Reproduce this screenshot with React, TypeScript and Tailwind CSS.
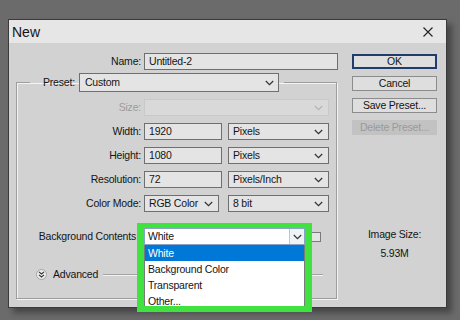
import React from "react";

function Chevron({ color = "#333" }: { color?: string }) {
	return (
		<svg width="9" height="6" viewBox="0 0 9 6" className="shrink-0">
			<path d="M0.8 1 L4.5 4.7 L8.2 1" fill="none" stroke={color} strokeWidth="1.2" />
		</svg>
	);
}

function Field({ value, w }: { value: string; w: string }) {
	return (
		<div className={`${w} h-[17px] border border-[#6f6f6f] bg-[#e4e4e4] pl-[4px] flex items-center text-[10.5px] leading-none`}>
			{value}
		</div>
	);
}

function Select({ value, w }: { value: string; w: string }) {
	return (
		<div className={`${w} h-[17px] border border-[#6f6f6f] bg-[#e4e4e4] pl-[4px] pr-[5px] flex items-center justify-between text-[10.5px] leading-none`}>
			<span>{value}</span>
			<Chevron />
		</div>
	);
}

function Label({ text, dim }: { text: string; dim?: boolean }) {
	return (
		<div className={`w-[124px] text-right text-[10.5px] leading-none ${dim ? "text-[#9c9c9c]" : ""}`}>
			{text}
		</div>
	);
}

function Button({ text, primary, disabled }: { text: string; primary?: boolean; disabled?: boolean }) {
	let cls = "border border-[#8c8c8c] bg-[#dedede]";
	if (primary) cls = "border-2 border-[#1f3c6c] bg-[#dedede]";
	if (disabled) cls = "border border-[#c2c2c2] bg-[#c2c2c2] text-[#9a9a9a]";
	return (
		<div className={`w-[85px] h-[15px] flex items-center justify-center text-[10.5px] leading-none ${cls}`}>
			{text}
		</div>
	);
}

export default function App() {
	return (
		<div className="w-[460px] h-[320px] overflow-hidden bg-[#6b6b6b] pt-[19px] pl-[8px] font-['Liberation_Sans',Arial,sans-serif] tracking-[-0.2px] text-[#141414]">
			<div className="w-[439px] h-[289px] bg-[#d2d2d2] border border-[#3a3a3a] shadow-[5px_5px_6px_rgba(0,0,0,0.35)] flex flex-col">
				{/* title bar */}
				<div className="h-[23px] shrink-0 bg-[#e6e6e6] flex items-center justify-between pl-[3px] pr-[13px]">
					<span className="text-[14px] leading-none tracking-normal">New</span>
					<svg width="10" height="10" viewBox="0 0 10 10">
						<path d="M0.5 0.5 L9.5 9.5 M9.5 0.5 L0.5 9.5" stroke="#222" strokeWidth="1.1" />
					</svg>
				</div>

				<div className="flex flex-1">
					{/* left side */}
					<div className="w-[331px] pt-[10px]">
						<div className="flex items-center">
							<div className="w-[132px] text-right text-[10.5px] leading-none">Name:</div>
							<div className="ml-[3px]">
								<Field value="Untitled-2" w="w-[194px]" />
							</div>
						</div>

						<fieldset className="ml-[7px] mt-[3px] w-[321px] border border-[#9d9d9d] shadow-[inset_1px_1px_0_#f4f4f4,1px_1px_0_#f4f4f4] pb-[18px]">
							<legend className="ml-[13px] pl-[13px] pr-[5px] flex items-center gap-[4px]">
								<span className="text-[10.5px] leading-none">Preset:</span>
								<div className="w-[200px] h-[19px] border border-[#6f6f6f] bg-[#e4e4e4] pl-[5px] pr-[4px] flex items-center justify-between text-[10.5px] leading-none">
									<span>Custom</span>
									<Chevron />
								</div>
							</legend>

							<div className="flex flex-col gap-[7px] pt-[7px]">
								<div className="flex items-center gap-[3px]">
									<Label text="Size:" dim />
									<div className="w-[185px] h-[17px] border border-[#c9c9c9] bg-[#d9d9d9] pr-[5px] flex items-center justify-end">
										<Chevron color="#b4b4b4" />
									</div>
								</div>
								<div className="flex items-center gap-[3px]">
									<Label text="Width:" />
									<Field value="1920" w="w-[78px]" />
									<div className="ml-[3px]">
										<Select value="Pixels" w="w-[101px]" />
									</div>
								</div>
								<div className="flex items-center gap-[3px]">
									<Label text="Height:" />
									<Field value="1080" w="w-[78px]" />
									<div className="ml-[3px]">
										<Select value="Pixels" w="w-[101px]" />
									</div>
								</div>
								<div className="flex items-center gap-[3px]">
									<Label text="Resolution:" />
									<Field value="72" w="w-[78px]" />
									<div className="ml-[3px]">
										<Select value="Pixels/Inch" w="w-[101px]" />
									</div>
								</div>
								<div className="flex items-center gap-[3px]">
									<Label text="Color Mode:" />
									<Select value="RGB Color" w="w-[75px]" />
									<div className="ml-[6px]">
										<Select value="8 bit" w="w-[101px]" />
									</div>
								</div>
							</div>

							{/* background contents */}
							<div className="relative mt-[16px] flex items-center">
								<div className="w-[119px] text-right text-[10.5px] leading-none">Background Contents</div>
								<div className="ml-[8px] w-[161px] h-[17px] border border-[#8aa4c8] bg-white pl-[3px] flex items-center justify-between text-[10.5px] leading-none">
									<span>White</span>
									<div className="w-[15px] h-full border-l border-[#b9c6d6] bg-[#eef3f8] flex items-center justify-center">
										<Chevron />
									</div>
								</div>
								<div className="ml-[6px] w-[10px] h-[10px] border border-[#7a7a7a] bg-[#e4e4e4]" />

								{/* open list */}
								<div className="absolute left-[127px] top-[17px] z-10 w-[161px] h-[62px] overflow-hidden bg-white border-x border-[#7a7a7a] text-[10.5px] leading-none">
									<div className="h-[16px] bg-[#0078d7] text-white pl-[3px] flex items-center">White</div>
									<div className="h-[16px] pl-[3px] flex items-center">Background Color</div>
									<div className="h-[16px] pl-[3px] flex items-center">Transparent</div>
									<div className="h-[16px] pl-[3px] flex items-center">Other...</div>
								</div>

								{/* highlight frame */}
								<div className="absolute left-[120px] top-[-5px] z-20 w-[175px] h-[89px] border-[#3fe23f] border-x-[7px] border-t-[5px] border-b-[6px]" />
							</div>

							<div className="mt-[24px] flex items-center">
								<div className="ml-[19px] w-[11px] h-[11px] rounded-full border border-[#a5a5a5] bg-[#ececec] flex items-center justify-center">
									<svg width="7" height="7" viewBox="0 0 7 7">
										<path d="M1 0.8 L3.5 3 L6 0.8 M1 3.8 L3.5 6 L6 3.8" fill="none" stroke="#333" strokeWidth="1.1" />
									</svg>
								</div>
								<span className="ml-[6px] text-[10.5px] leading-none">Advanced</span>
								<div className="ml-[5px] mr-[13px] flex-1 h-[2px] border-t border-[#a2a2a2] border-b border-b-[#f2f2f2]" />
							</div>
						</fieldset>
					</div>

					{/* right side */}
					<div className="flex-1 pt-[11px] pl-[12px] flex flex-col">
						<div className="flex flex-col gap-[7px]">
							<Button text="OK" primary />
							<Button text="Cancel" />
							<Button text="Save Preset..." />
							<Button text="Delete Preset..." disabled />
						</div>
						<div className="w-[85px] mt-[93px] text-center text-[10.5px] leading-[13px]">Image Size:</div>
						<div className="w-[85px] mt-[6px] text-center text-[10.5px] leading-[13px]">5.93M</div>
					</div>
				</div>
			</div>
		</div>
	);
}
